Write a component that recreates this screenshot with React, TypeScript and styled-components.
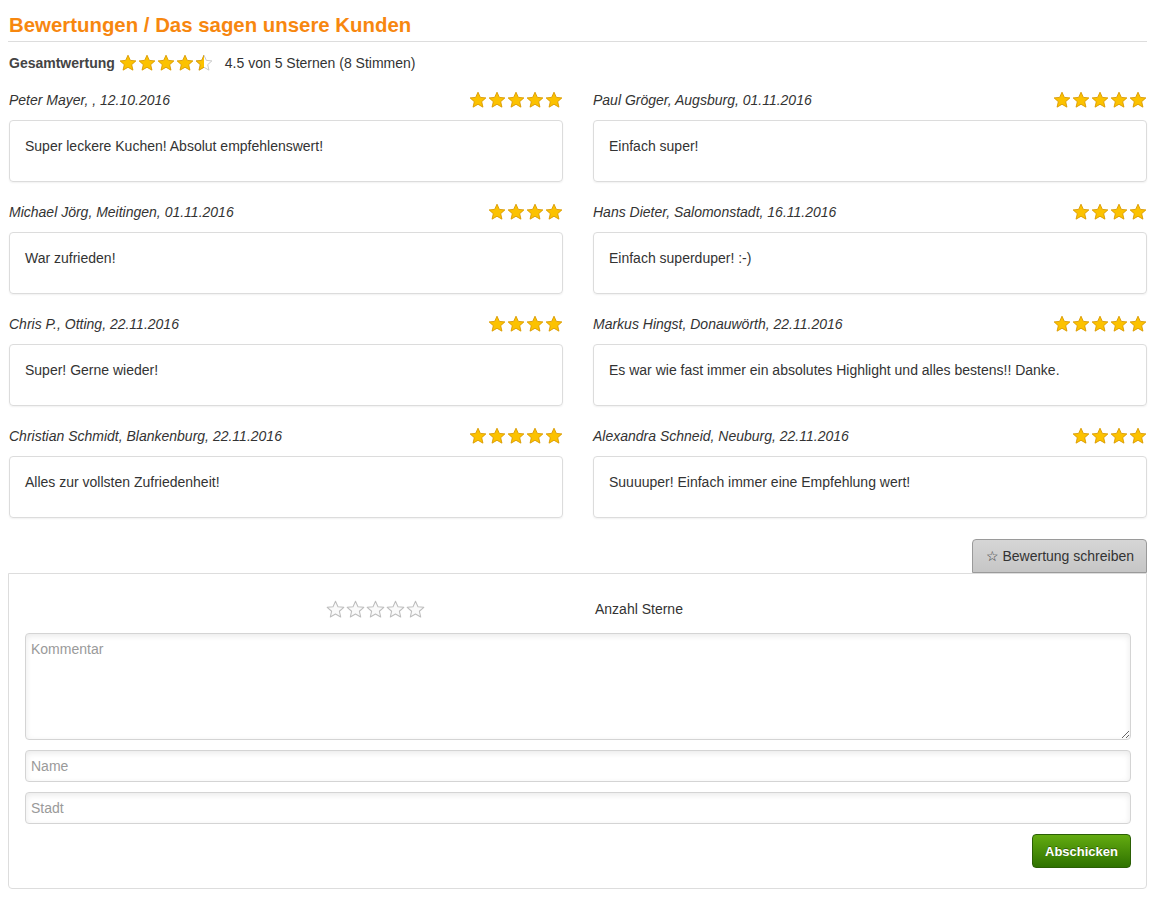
import React from 'react'
import styled, { createGlobalStyle } from 'styled-components'

const GlobalStyle = createGlobalStyle`
    body {
        margin: 0;
        background: #ffffff;
        font-family: "Liberation Sans", Arial, Helvetica, sans-serif;
        color: #333333;
    }
`;

type Review = { name: string; place: string; date: string; stars: number; text: string };

const reviews: Review[] = [
    { name: 'Peter Mayer', place: '', date: '12.10.2016', stars: 5, text: 'Super leckere Kuchen! Absolut empfehlenswert!' },
    { name: 'Paul Gröger', place: 'Augsburg', date: '01.11.2016', stars: 5, text: 'Einfach super!' },
    { name: 'Michael Jörg', place: 'Meitingen', date: '01.11.2016', stars: 4, text: 'War zufrieden!' },
    { name: 'Hans Dieter', place: 'Salomonstadt', date: '16.11.2016', stars: 4, text: 'Einfach superduper! :-)' },
    { name: 'Chris P.', place: 'Otting', date: '22.11.2016', stars: 4, text: 'Super! Gerne wieder!' },
    { name: 'Markus Hingst', place: 'Donauwörth', date: '22.11.2016', stars: 5, text: 'Es war wie fast immer ein absolutes Highlight und alles bestens!! Danke.' },
    { name: 'Christian Schmidt', place: 'Blankenburg', date: '22.11.2016', stars: 5, text: 'Alles zur vollsten Zufriedenheit!' },
    { name: 'Alexandra Schneid', place: 'Neuburg', date: '22.11.2016', stars: 4, text: 'Suuuuper! Einfach immer eine Empfehlung wert!' },
];

const Wrapper = styled.div`
    width: 1139px;
    margin-left: 8px;
    padding-top: 12px;
    padding-bottom: 13px;
`;

const Title = styled.h2`
    margin: 0;
    font-size: 20.4px;
    line-height: 26px;
    font-weight: bold;
    color: #f7870f;
    padding: 0 0 3px 1px;
    border-bottom: 1px solid #dddddd;
`;

const Summary = styled.div`
    display: flex;
    align-items: center;
    height: 20px;
    margin: 11px 0 17px 1px;
    font-size: 14px;
`;

const SummaryLabel = styled.strong`
    font-weight: bold;
    color: #444444;
    margin-right: 4px;
`;

const SummaryText = styled.span`
    margin-left: 12px;
    color: #333333;
`;

const ReviewGrid = styled.div`
    display: grid;
    grid-template-columns: 1fr 1fr;
    column-gap: 30px;
    padding-left: 1px;
`;

const ReviewItem = styled.div`
    margin-bottom: 20px;
`;

const ReviewHead = styled.div`
    display: flex;
    justify-content: space-between;
    align-items: center;
    height: 20px;
    margin-bottom: 10px;
`;

const ReviewAuthor = styled.em`
    font-size: 14px;
    color: #333333;
`;

const ReviewBox = styled.div`
    height: 62px;
    box-sizing: border-box;
    border: 1px solid #dcdcdc;
    border-radius: 4px;
    box-shadow: 0 1px 2px rgba(0, 0, 0, 0.06);
    padding: 15px 15px 0 15px;
    font-size: 14px;
    line-height: 20px;
    color: #333333;
`;

const StarRow = styled.span<{ $gap: number }>`
    display: inline-flex;
    gap: ${p => p.$gap}px;
`;

const WriteBar = styled.div`
    display: flex;
    justify-content: flex-end;
    margin-top: 1px;
`;

const WriteButton = styled.button`
    font-family: inherit;
    font-size: 14px;
    color: #333333;
    height: 34px;
    padding: 0 12px 0 13px;
    background: linear-gradient(#d6d6d6, #c6c6c6);
    border: 1px solid #9a9a9a;
    border-radius: 4px 4px 0 0;
    cursor: pointer;
`;

const FormBox = styled.div`
    border: 1px solid #dddddd;
    border-radius: 0 0 4px 4px;
    padding: 23px 15px 20px 16px;
    display: flex;
    flex-direction: column;
    gap: 10px;
`;

const RatingRow = styled.div`
    display: flex;
    align-items: center;
    height: 24px;
    padding-left: 301px;
    margin-bottom: 2px;
`;

const RatingLabel = styled.span`
    margin-left: 170px;
    font-size: 14px;
    color: #333333;
`;

const fieldStyle = `
    box-sizing: border-box;
    width: 100%;
    font-family: "Liberation Sans", Arial, Helvetica, sans-serif;
    font-size: 14px;
    color: #333333;
    background: #ffffff;
    border: 1px solid #d4d4d4;
    border-radius: 4px;
    box-shadow: inset 0 2px 6px rgba(0, 0, 0, 0.09);
    padding: 0 5px;
    outline: none;

    &::placeholder {
        color: #9a9a9a;
    }
`;

const CommentField = styled.textarea`
    ${fieldStyle}
    height: 107px;
    padding-top: 7px;
    resize: vertical;
    display: block;
`;

const TextField = styled.input`
    ${fieldStyle}
    height: 32px;
`;

const SubmitBar = styled.div`
    display: flex;
    justify-content: flex-end;
`;

const SubmitButton = styled.button`
    font-family: inherit;
    font-size: 13px;
    font-weight: bold;
    color: #ffffff;
    text-shadow: 0 -1px 0 rgba(0, 0, 0, 0.35);
    height: 34px;
    padding: 0 12px;
    background: linear-gradient(#63ab10, #2f7200);
    border: 1px solid #2b5f05;
    border-radius: 4px;
    cursor: pointer;
`;

const STAR = 'M12 1.6l3.1 6.9 7.4.7-5.6 5 1.7 7.3L12 17.7l-6.6 3.8 1.7-7.3-5.6-5 7.4-.7z';

function Star({ size, mode }: { size: number; mode: 'full' | 'half' | 'empty' }) {
    const id = React.useId();
    if (mode === 'empty') {
        return (
            <svg width={size} height={size} viewBox="0 0 24 24">
                <path d={STAR} fill="#fafafa" stroke="#bdbdbd" strokeWidth="1.3" strokeLinejoin="round" />
            </svg>
        );
    }
    return (
        <svg width={size} height={size} viewBox="0 0 24 24">
            {mode === 'half' && (
                <defs>
                    <clipPath id={id}>
                        <rect x="0" y="0" width="12" height="24" />
                    </clipPath>
                </defs>
            )}
            {mode === 'half' && (
                <path d={STAR} fill="#ffffff" stroke="#c4c4c4" strokeWidth="1.2" strokeLinejoin="round" />
            )}
            <path
                d={STAR}
                fill="#fcc200"
                stroke="#d99a00"
                strokeWidth="1.2"
                strokeLinejoin="round"
                clipPath={mode === 'half' ? `url(#${id})` : undefined}
            />
        </svg>
    );
}

// count: how many star slots to draw (reviews only show the earned stars)
function Stars({ value, count = 5, size = 18, gap = 1 }: { value: number; count?: number; size?: number; gap?: number }) {
    return (
        <StarRow $gap={gap}>
            {Array.from({ length: count }, (_, i) => (
                <Star key={i} size={size} mode={value >= i + 1 ? 'full' : value > i ? 'half' : 'empty'} />
            ))}
        </StarRow>
    );
}

export default function App() {
    return (
        <>
            <GlobalStyle />
            <Wrapper>
                <Title>Bewertungen / Das sagen unsere Kunden</Title>

                <Summary>
                    <SummaryLabel>Gesamtwertung</SummaryLabel>
                    <Stars value={4.5} />
                    <SummaryText>4.5 von 5 Sternen (8 Stimmen)</SummaryText>
                </Summary>

                <ReviewGrid>
                    {reviews.map(r => (
                        <ReviewItem key={r.name}>
                            <ReviewHead>
                                <ReviewAuthor>{r.name}, {r.place}, {r.date}</ReviewAuthor>
                                <Stars value={r.stars} count={r.stars} />
                            </ReviewHead>
                            <ReviewBox>{r.text}</ReviewBox>
                        </ReviewItem>
                    ))}
                </ReviewGrid>

                <WriteBar>
                    <WriteButton>☆ Bewertung schreiben</WriteButton>
                </WriteBar>
                <FormBox>
                    <RatingRow>
                        <Stars value={0} size={19} gap={1} />
                        <RatingLabel>Anzahl Sterne</RatingLabel>
                    </RatingRow>
                    <CommentField placeholder="Kommentar" />
                    <TextField placeholder="Name" />
                    <TextField placeholder="Stadt" />
                    <SubmitBar>
                        <SubmitButton>Abschicken</SubmitButton>
                    </SubmitBar>
                </FormBox>
            </Wrapper>
        </>
    );
}
